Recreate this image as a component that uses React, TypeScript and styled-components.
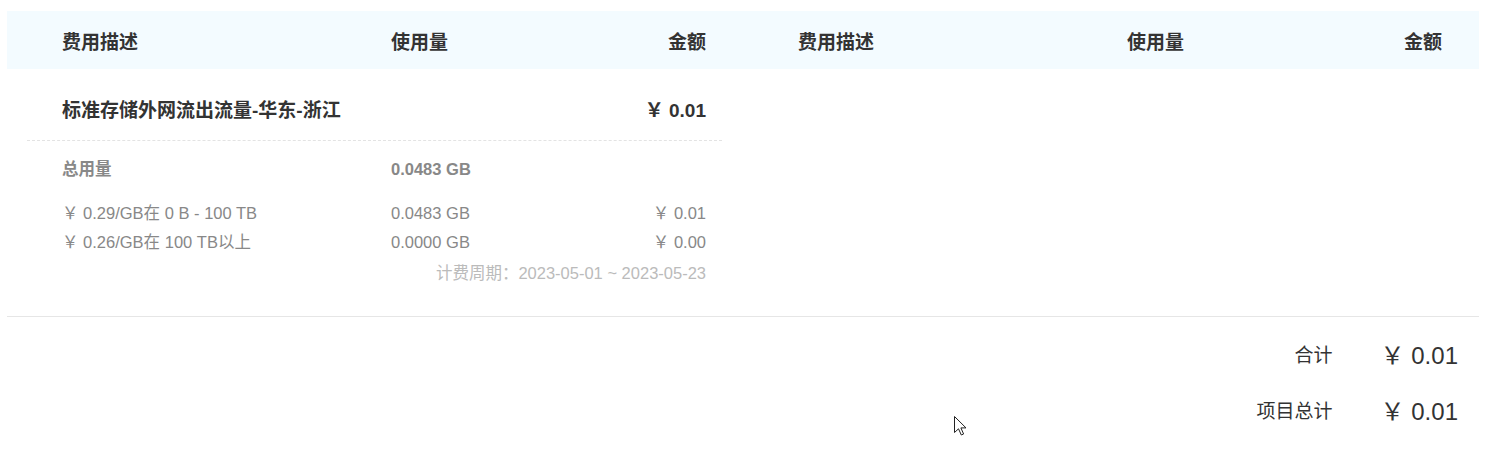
import React from 'react';
import styled, { createGlobalStyle } from 'styled-components';

const GlobalStyle = createGlobalStyle`
    body {
        margin: 0;
        background: #fff;
        font-family: "Liberation Sans", "Noto Sans CJK SC", sans-serif;
        color: #333;
    }
`;

const tiers = [
    { label: '￥ 0.29/GB在 0 B - 100 TB', usage: '0.0483 GB', amount: '￥ 0.01' },
    { label: '￥ 0.26/GB在 100 TB以上', usage: '0.0000 GB', amount: '￥ 0.00' },
];

const totals = [
    { label: '合计', amount: '￥ 0.01' },
    { label: '项目总计', amount: '￥ 0.01' },
];

const BillTable = () => {
    return (
        <Page>
            <GlobalStyle />
            <Columns>
                <Half>
                    <HeadRow>
                        <span>费用描述</span>
                        <span>使用量</span>
                        <Right>金额</Right>
                    </HeadRow>
                    <Card>
                        <ItemRow>
                            <span>标准存储外网流出流量-华东-浙江</span>
                            <span />
                            <Right>￥ 0.01</Right>
                        </ItemRow>
                        <Details>
                            <DetailRow strong>
                                <span>总用量</span>
                                <span>0.0483 GB</span>
                                <span />
                            </DetailRow>
                            {tiers.map((t) => (
                                <DetailRow key={t.label}>
                                    <span>{t.label}</span>
                                    <span>{t.usage}</span>
                                    <Right>{t.amount}</Right>
                                </DetailRow>
                            ))}
                            <Period>计费周期：2023-05-01 ~ 2023-05-23</Period>
                        </Details>
                    </Card>
                </Half>
                <Half>
                    <HeadRow>
                        <span>费用描述</span>
                        <span>使用量</span>
                        <Right>金额</Right>
                    </HeadRow>
                </Half>
            </Columns>
            <Totals>
                {totals.map((t) => (
                    <TotalRow key={t.label}>
                        <TotalLabel>{t.label}</TotalLabel>
                        <TotalAmount>{t.amount}</TotalAmount>
                    </TotalRow>
                ))}
            </Totals>
            <Cursor width="13" height="20" viewBox="0 0 13 20">
                <path d="M0.5 0.5 L0.5 16.5 L4.5 12.8 L7.3 19 L9.6 18 L6.9 11.9 L12 11.9 Z" fill="#fff" stroke="#222" strokeWidth="1" />
            </Cursor>
        </Page>
    );
};

export default BillTable;

const Page = styled.div`
    position: relative;
    box-sizing: border-box;
    height: 471px;
    padding: 11px 21px 0 7px;
    overflow: hidden;
`;

const Columns = styled.div`
    display: grid;
    grid-template-columns: 1fr 1fr;
    border-bottom: 1px solid #e6e6e6;
`;

const Half = styled.div`
    display: flex;
    flex-direction: column;
`;

const HeadRow = styled.div`
    display: grid;
    grid-template-columns: 329px 1fr auto;
    align-items: center;
    height: 58px;
    padding: 0 37px 0 55px;
    background: #f3fbff;
    font-size: 19px;
    font-weight: bold;
    color: #333;
`;

const Right = styled.span`
    text-align: right;
`;

const Card = styled.div`
    margin: 0 21px 0 20px;
`;

const ItemRow = styled.div`
    display: grid;
    grid-template-columns: 329px 1fr auto;
    padding: 31px 16px 18px 35px;
    line-height: 22px;
    font-size: 19px;
    font-weight: bold;
    color: #333;
    border-bottom: 1px dashed #e3e3e3;
    white-space: nowrap;
`;

const Details = styled.div`
    padding: 14px 16px 28px 35px;
    font-size: 16.5px;
    color: #888;
`;

const DetailRow = styled.div<{ strong?: boolean }>`
    display: grid;
    grid-template-columns: 329px 1fr auto;
    line-height: 29px;
    font-weight: ${(props) => (props.strong ? 'bold' : 'normal')};
    margin-bottom: ${(props) => (props.strong ? '15px' : '0')};
    white-space: nowrap;
`;

const Period = styled.div`
    margin-top: 2px;
    line-height: 29px;
    text-align: right;
    color: #bbb;
`;

const Totals = styled.div`
    display: flex;
    flex-direction: column;
    gap: 16px;
    padding: 16px 21px 0 0;
`;

const TotalRow = styled.div`
    display: flex;
    justify-content: flex-end;
    align-items: center;
    height: 40px;
`;

const TotalLabel = styled.span`
    font-size: 19px;
    color: #333;
`;

const TotalAmount = styled.span`
    margin-left: 48px;
    font-size: 24px;
    color: #333;
`;

const Cursor = styled.svg`
    position: absolute;
    left: 954px;
    top: 416px;
`;
